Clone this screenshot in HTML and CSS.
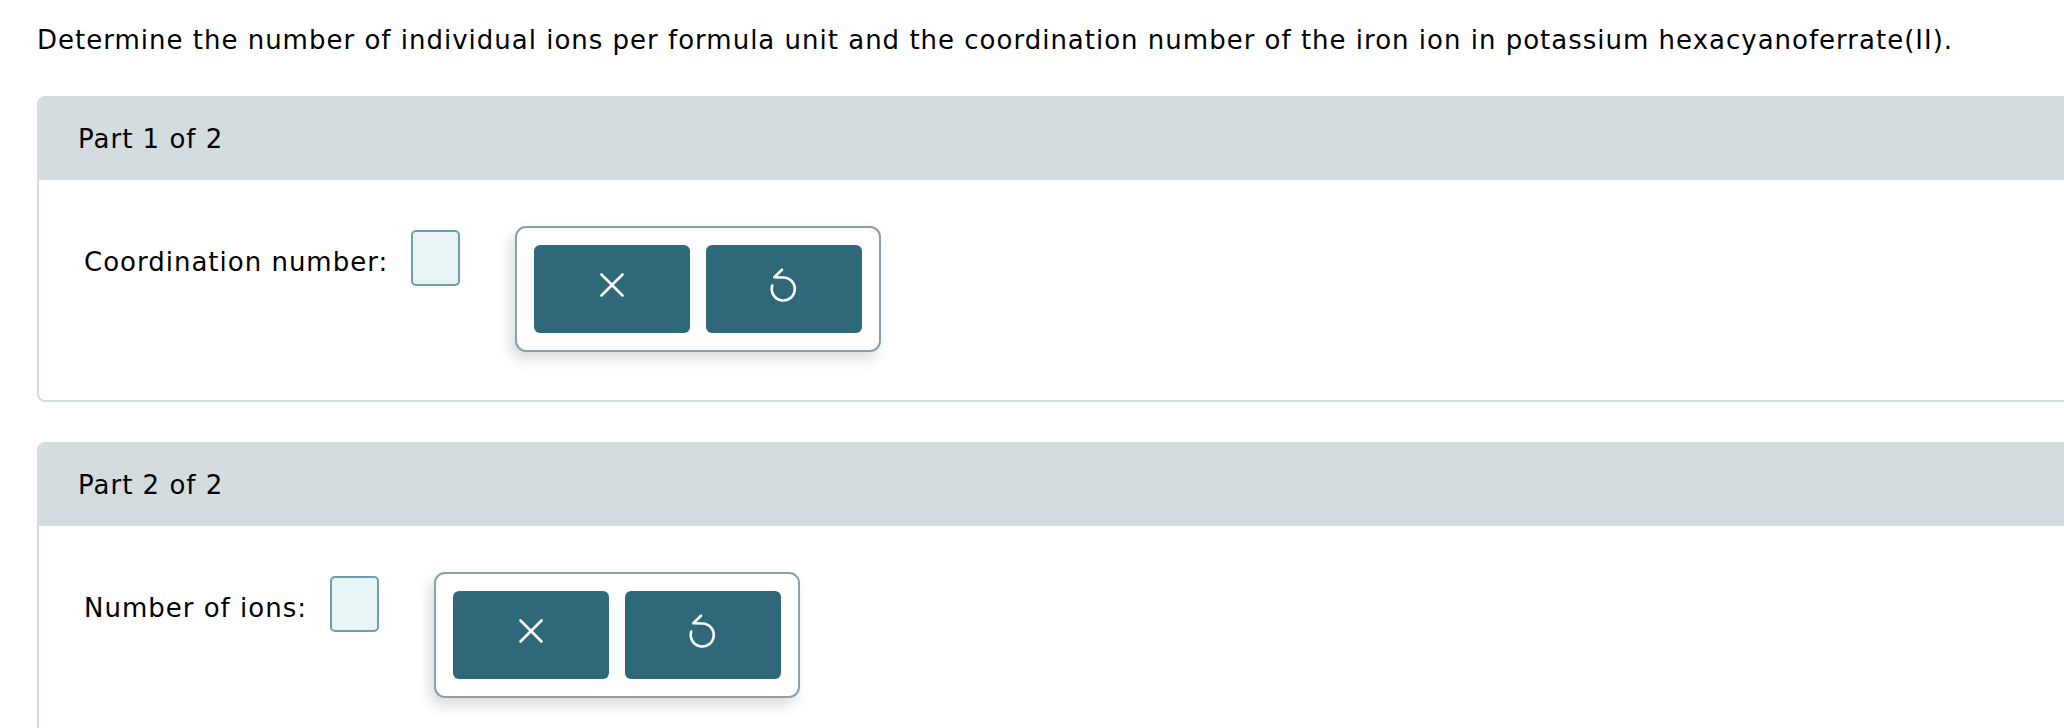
FILE: index.html
```html
<!DOCTYPE html>
<html lang="en">
<head>
<meta charset="utf-8">
<title>Potassium hexacyanoferrate(II)</title>
<link rel="stylesheet" href="styles.css">
</head>
<body>
<div class="page">
  <p class="question">Determine the number of individual ions per formula unit and the coordination number of the iron ion in potassium hexacyanoferrate(II).</p>

  <section class="card">
    <div class="card-header">Part 1 of 2</div>
    <div class="card-body">
      <div class="answer-row">
        <span class="label">Coordination number:</span>
        <span class="answer-box"></span>
        <div class="tools">
          <button class="tool-btn" type="button" aria-label="Clear">
            <svg class="icon-x" width="24" height="24" viewBox="0 0 24 24"><path d="M1.5 1.5 L22.5 22.5 M22.5 1.5 L1.5 22.5" fill="none" stroke="#fff" stroke-width="2.6" stroke-linecap="round"/></svg>
          </button>
          <button class="tool-btn" type="button" aria-label="Undo">
            <svg class="icon-undo" width="32" height="46" viewBox="0 0 32 46"><path d="M14 3.7 L6.3 11.3 L15.5 11.5 A11.5 11.5 0 1 1 4.3 19.5" fill="none" stroke="#fff" stroke-width="2.6" stroke-linecap="round" stroke-linejoin="round"/></svg>
          </button>
        </div>
      </div>
    </div>
  </section>

  <section class="card">
    <div class="card-header">Part 2 of 2</div>
    <div class="card-body">
      <div class="answer-row">
        <span class="label">Number of ions:</span>
        <span class="answer-box"></span>
        <div class="tools">
          <button class="tool-btn" type="button" aria-label="Clear">
            <svg class="icon-x" width="24" height="24" viewBox="0 0 24 24"><path d="M1.5 1.5 L22.5 22.5 M22.5 1.5 L1.5 22.5" fill="none" stroke="#fff" stroke-width="2.6" stroke-linecap="round"/></svg>
          </button>
          <button class="tool-btn" type="button" aria-label="Undo">
            <svg class="icon-undo" width="32" height="46" viewBox="0 0 32 46"><path d="M14 3.7 L6.3 11.3 L15.5 11.5 A11.5 11.5 0 1 1 4.3 19.5" fill="none" stroke="#fff" stroke-width="2.6" stroke-linecap="round" stroke-linejoin="round"/></svg>
          </button>
        </div>
      </div>
    </div>
  </section>
</div>
</body>
</html>
```

FILE: styles.css
```css
html, body {
  margin: 0;
  padding: 0;
  background: #ffffff;
  overflow: hidden;
}

body {
  font-family: "DejaVu Sans", Verdana, sans-serif;
  color: #000000;
  letter-spacing: 1px;
}

.page {
  padding: 24px 0 0 37px;
}

.question {
  margin: 0 0 40px 0;
  font-size: 26px;
  line-height: 32px;
}

.card {
  border: 2px solid #d2dbdf;
  border-radius: 8px;
  margin-right: -60px;
  margin-bottom: 40px;
  background: #ffffff;
  overflow: hidden;
}

.card-header {
  background: #d3dcdf;
  height: 82px;
  line-height: 82px;
  font-size: 26px;
  padding-left: 39px;
}

.card-body {
  padding: 46px 0 48px 45px;
}

.answer-row {
  display: flex;
  align-items: flex-start;
}

.label {
  font-size: 26px;
  line-height: 32px;
  margin-top: 20px;
}

.answer-box {
  box-sizing: border-box;
  width: 49px;
  height: 56px;
  margin: 4px 0 0 23px;
  border: 2px solid #6d9fae;
  border-radius: 5px;
  background: #e8f3f6;
}

.tools {
  box-sizing: border-box;
  display: flex;
  gap: 16px;
  width: 366px;
  height: 126px;
  margin-left: 55px;
  padding: 17px;
  border: 2px solid #8aa0aa;
  border-radius: 11px;
  background: #ffffff;
  box-shadow: -4px 7px 14px rgba(40, 60, 70, 0.18);
}

.tool-btn {
  flex: 1;
  display: flex;
  align-items: center;
  justify-content: center;
  height: 88px;
  border: none;
  border-radius: 6px;
  background: #2e6879;
  padding: 0;
  cursor: pointer;
}

.icon-x {
  margin-bottom: 8px;
}
```
